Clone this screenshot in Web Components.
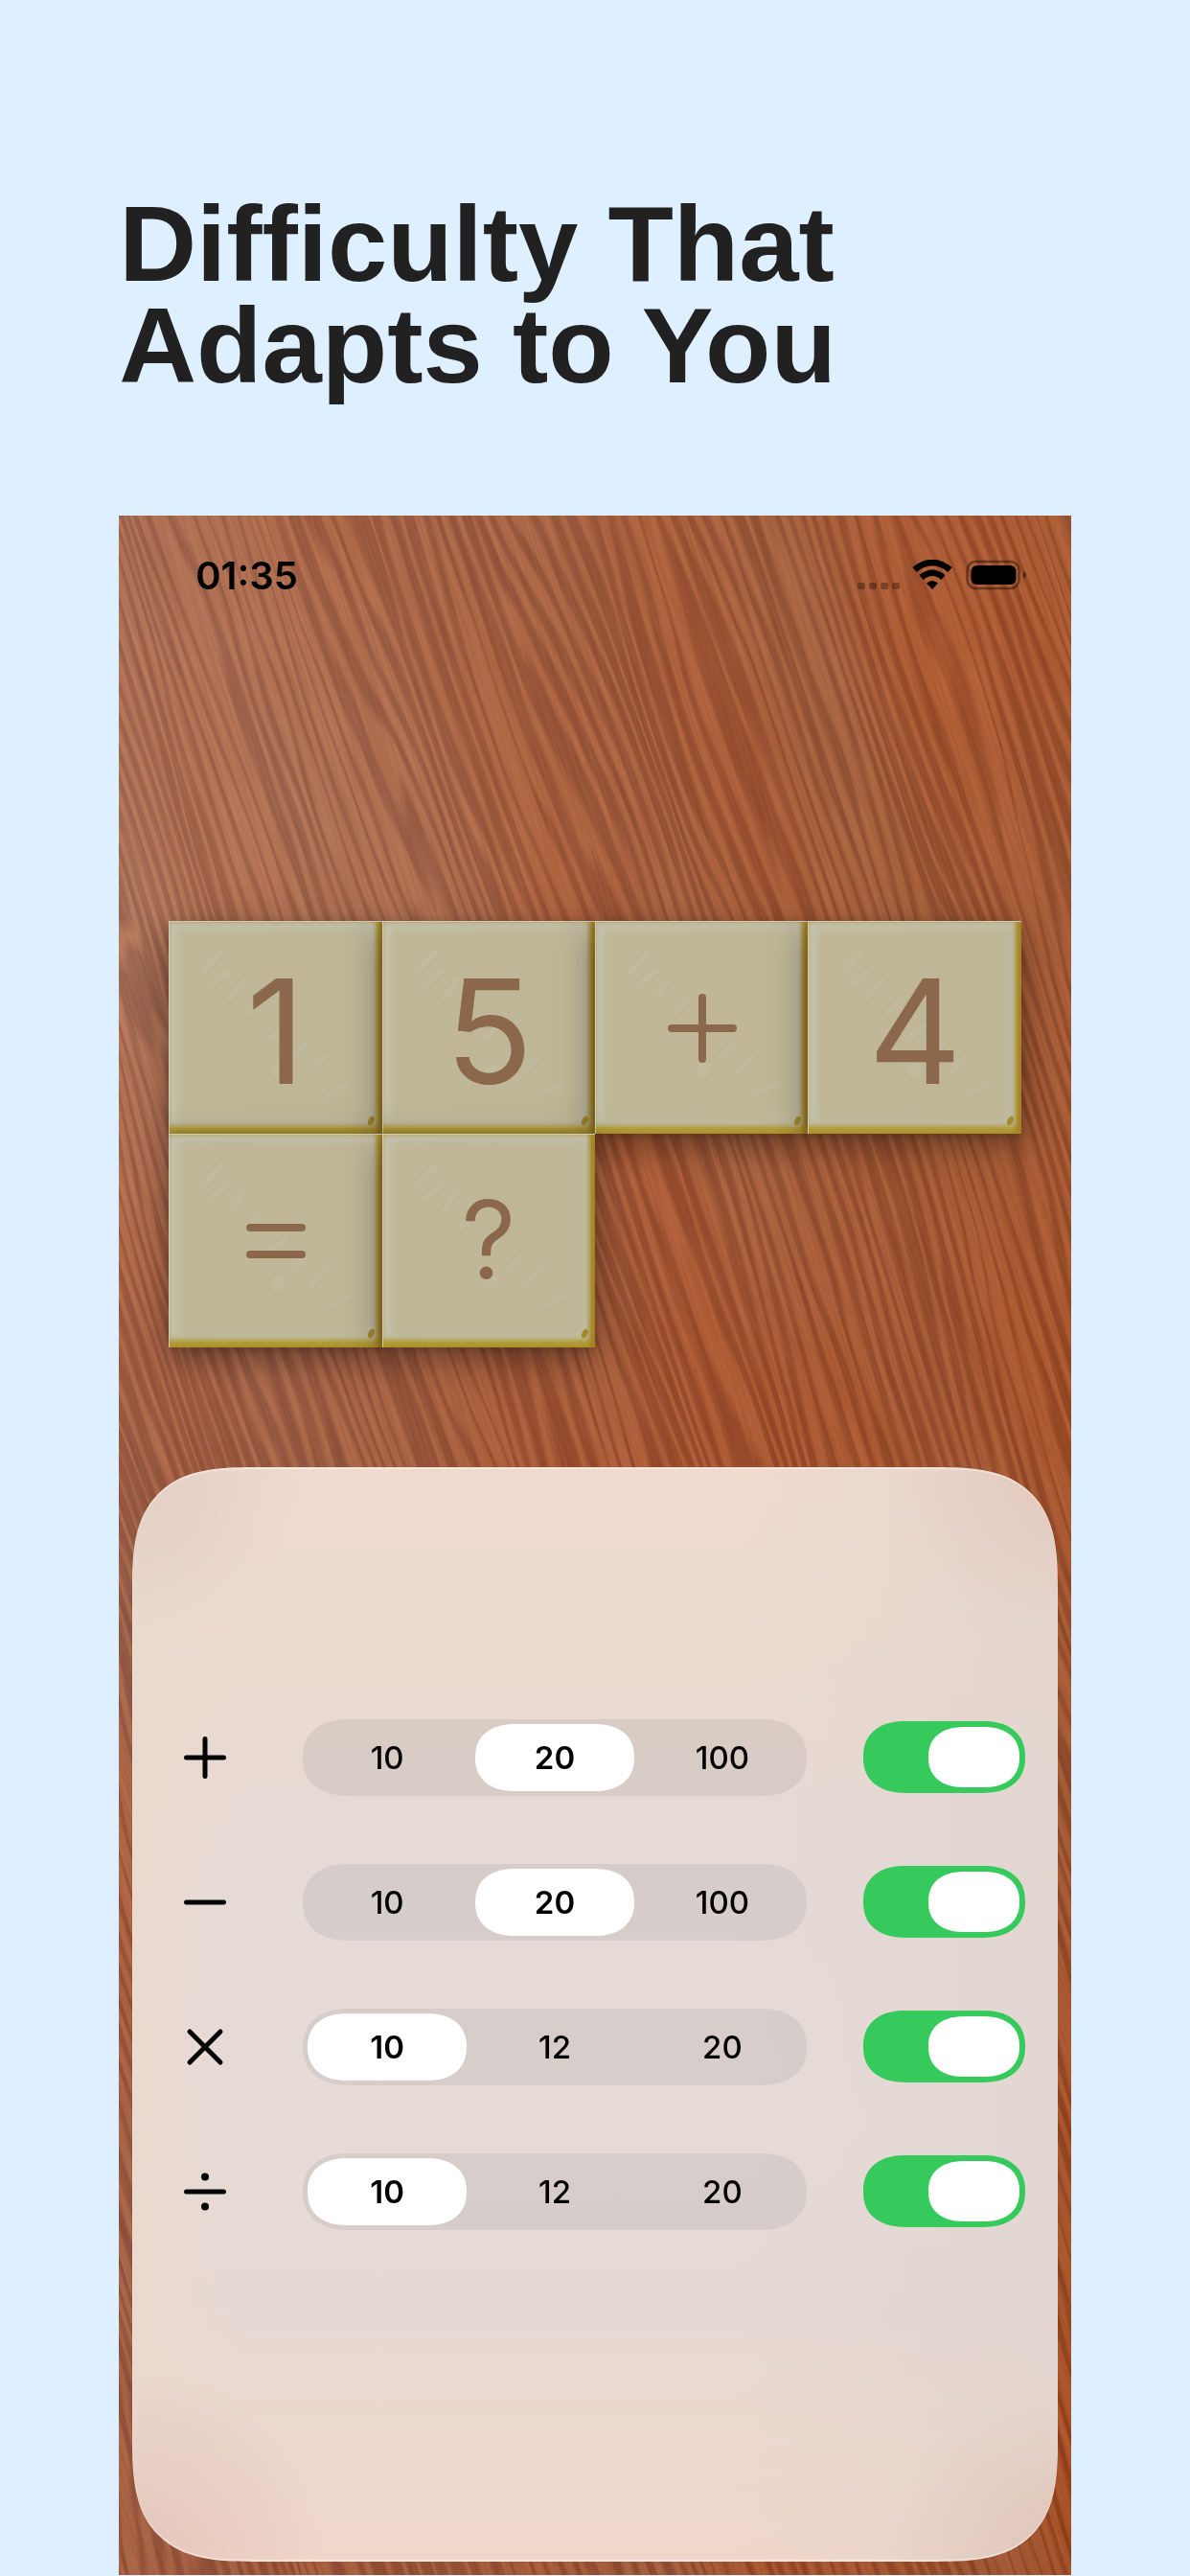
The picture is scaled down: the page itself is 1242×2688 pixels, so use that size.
<!DOCTYPE html>
<html lang="en">
<head>
<meta charset="utf-8">
<meta name="viewport" content="width=device-width, initial-scale=1">
<title>Difficulty That Adapts to You</title>
<style>
	body {
		margin: 0;
		background: #def0ff;
	}
</style>
</head>
<body>
<promo-page>
	<span slot="title">Difficulty That<br>Adapts to You</span>
	<wood-surface>
		<status-bar time="01:35"></status-bar>
		<tile-board>
			<math-tile>1</math-tile>
			<math-tile>5</math-tile>
			<math-tile symbol="plus"></math-tile>
			<math-tile>4</math-tile>
			<math-tile symbol="equals"></math-tile>
			<math-tile symbol="unknown"></math-tile>
		</tile-board>
		<settings-panel>
			<operation-row operation="plus" options="10,20,100" value="20"></operation-row>
			<operation-row operation="minus" options="10,20,100" value="20"></operation-row>
			<operation-row operation="times" options="10,12,20" value="10"></operation-row>
			<operation-row operation="divide" options="10,12,20" value="10"></operation-row>
		</settings-panel>
	</wood-surface>
</promo-page>

<script>
function attach (el, html) {
	const template = document.createElement('template');
	template.innerHTML = html;
	const root = el.attachShadow({ mode : 'open' });
	root.appendChild(template.content.cloneNode(true));
	return root;
}

class PromoPage extends HTMLElement {
	constructor () {
		super();
		attach(this, `
			<style>
				:host {
					display: flex;
					flex-direction: column;
					gap: 124px;
					padding: 202px 10% 2px;
				}
				h1 {
					margin: 0;
					color: #212121;
					font: bold 112px/106px "Liberation Sans", Arial, sans-serif;
				}
			</style>
			<h1><slot name="title"></slot></h1>
			<slot></slot>
		`);
	}
}

// smooth value noise, one lattice for the whole surface
const lattice = new Float32Array(65536);
let seed = 7;
for (let i = 0; i < lattice.length; i++) {
	seed = (seed * 1664525 + 1013904223) >>> 0;
	lattice[i] = seed / 4294967296;
}

function noise (x, y) {
	const xi = Math.floor(x), yi = Math.floor(y);
	let fx = x - xi, fy = y - yi;
	fx = fx * fx * (3 - 2 * fx);
	fy = fy * fy * (3 - 2 * fy);
	const x0 = xi & 255, x1 = (xi + 1) & 255;
	const y0 = (yi & 255) << 8, y1 = ((yi + 1) & 255) << 8;
	const a = lattice[y0 + x0], b = lattice[y0 + x1];
	const c = lattice[y1 + x0], d = lattice[y1 + x1];
	return a + (b - a) * fx + (c - a + (a - b - c + d) * fx) * fy;
}

class WoodSurface extends HTMLElement {
	constructor () {
		super();
		this._root = attach(this, `
			<style>
				:host {
					display: flex;
					flex-direction: column;
					position: relative;
					overflow: hidden;
					padding-bottom: 14px;
					background: #a3623f;
				}
				canvas {
					position: absolute;
					inset: 0;
					width: 100%;
					height: 100%;
				}
			</style>
			<canvas></canvas>
			<slot></slot>
		`);
	}

	connectedCallback () {
		this.paint();
		window.addEventListener('resize', () => this.paint());
	}

	paint () {
		const canvas = this._root.querySelector('canvas');
		const w = canvas.width = this.clientWidth;
		const h = canvas.height = this.clientHeight;
		if (!w || !h) return;
		const ctx = canvas.getContext('2d');
		const image = ctx.createImageData(w, h);
		const px = image.data;
		let i = 0;
		for (let y = 0; y < h; y++) {
			for (let x = 0; x < w; x++) {
				// u runs across the grain, v along it
				const u = x * 0.95 - y * 0.31 + 2000;
				const v = x * 0.31 + y * 0.95;
				const ring = u / 15 + 5 * noise(u / 230, v / 800) + 2.4 * noise(u / 45 + 30, v / 420) + 0.5 * noise(u / 12, v / 120);
				const wave = Math.abs((ring - Math.floor(ring)) * 2 - 1);
				const cut = 0.15 + 0.75 * noise(u / 34 + 90, v / 330 + 11);
				let dark = (wave - cut) * 2.6 + 0.5;
				dark = dark < 0 ? 0 : dark > 1 ? 1 : dark;
				const fine = noise(u / 2, v / 55) - 0.5;
				const patch = noise(u / 110 + 50, v / 380 + 5) - 0.5;
				const t = x / w;
				const glow = Math.max(0, 1 - Math.hypot(x + 20, y - h * 0.2) / (w * 0.6));
				const fade = y / h;
				px[i++] = 175 - 2 * t - 23 * dark + 12 * fine + 12 * glow - 8 * fade + 8 * patch;
				px[i++] = 108 - 13 * t - 18 * dark + 11 * fine + 14 * glow - 9 * fade - 8 * patch;
				px[i++] = 79 - 24 * t - 12 * dark + 10 * fine + 12 * glow - 9 * fade - 14 * patch;
				px[i++] = 255;
			}
		}
		ctx.putImageData(image, 0, 0);
	}
}

class StatusBar extends HTMLElement {
	constructor () {
		super();
		const root = attach(this, `
			<style>
				:host {
					display: flex;
					justify-content: space-between;
					align-items: center;
					position: relative;
					padding: 43px 46px 0 80px;
					color: #000;
					font: 600 40px/40px Inter, "Liberation Sans", sans-serif;
				}
				svg {
					display: block;
					width: 178px;
					height: 34px;
				}
			</style>
			<time></time>
			<svg viewBox="0 0 178 34" aria-hidden="true">
				<g fill="#000" fill-opacity=".3">
					<rect x="1" y="24" width="8" height="7" rx="2"/>
					<rect x="13" y="24" width="8" height="7" rx="2"/>
					<rect x="25" y="24" width="8" height="7" rx="2"/>
					<rect x="37" y="24" width="8" height="7" rx="2"/>
				</g>
				<g fill="none" stroke="#000" stroke-width="6.500">
					<path d="M60.500 10.500Q79 -4.500 97.500 10.500"/>
					<path d="M67.500 18.500Q79 9 90.500 18.500"/>
				</g>
				<path d="M73 24.500Q79 19.500 85 24.500L79 31Z"/>
				<rect x="115.500" y="2" width="54" height="28" rx="9" fill="none" stroke="#000" stroke-opacity=".4" stroke-width="2.500"/>
				<rect x="119.500" y="6" width="47" height="20" rx="6"/>
				<path d="M174 12Q180 16 174 20Z" fill-opacity=".5"/>
			</svg>
		`);
		root.querySelector('time').textContent = this.getAttribute('time');
	}
}

class TileBoard extends HTMLElement {
	constructor () {
		super();
		attach(this, `
			<style>
				:host {
					display: grid;
					grid-template-columns: repeat(4, 1fr);
					position: relative;
					margin: 340px 52px 125px;
				}
			</style>
			<slot></slot>
		`);
	}
}

const tileSymbols = {
	plus : '<path d="M40 76H104M72 44V108"/>',
	equals : '<path d="M45 62H99M45 90H99"/>',
	unknown : '<text x="72" y="114" text-anchor="middle">?</text>'
};

class MathTile extends HTMLElement {
	constructor () {
		super();
		const symbol = this.getAttribute('symbol');
		attach(this, `
			<style>
				:host {
					display: grid;
					place-items: center;
					position: relative;
					box-sizing: border-box;
					aspect-ratio: 1;
					color: #8b674b;
					font: 400 151px/152px Inter, "Liberation Sans", sans-serif;
					background: linear-gradient(90deg, #c6c6b4, #bfb798 6%, #beb697 92%, #bfbda6);
					border-top: 1px solid #c9cdbf;
					border-left: 1px solid #c9cdbf;
					box-shadow:
						0 12px 34px rgba(35, 22, 15, .5),
						0 2px 8px rgba(35, 22, 15, .2),
						inset -7px 0 5px -1px #a5841f,
						inset 0 -9px 5px -1px #b09830,
						inset 0 10px 10px -4px #c4c2ae,
						inset -18px -20px 14px -8px #bfbda6;
				}
				.marks {
					position: absolute;
					inset: 0;
					width: 100%;
					height: 100%;
				}
				.glyph {
					grid-area: 1 / 1;
					position: relative;
				}
				.digit {
					padding-top: 6px;
				}
				.icon {
					width: 144px;
					height: 152px;
					fill: none;
					stroke: currentColor;
					stroke-width: 8;
					stroke-linecap: round;
					stroke-linejoin: round;
				}
				.icon text {
					font: 300 110px Inter, "Liberation Sans", sans-serif;
					fill: currentColor;
					stroke-width: 2;
				}
			</style>
			<svg class="marks" viewBox="0 0 222 222" aria-hidden="true">
				<g fill="none" stroke="#c8c0aa" stroke-opacity=".35" stroke-width="5" stroke-linecap="round">
					<path d="M36 52L54 32M44 66L62 52M62 80L78 60M82 96L96 82"/>
					<path d="M104 122L122 108M128 142L144 126M148 158L165 140M166 180L188 170"/>
				</g>
				<circle cx="113" cy="156" r="8" fill="#c5bea4" fill-opacity=".4"/>
				<ellipse cx="211" cy="208" rx="3" ry="5" fill="#9f8b2c" transform="rotate(25 211 208)"/>
			</svg>
			${symbol
				? `<svg class="glyph icon" viewBox="0 0 144 152" role="img" aria-label="${symbol}">${tileSymbols[symbol]}</svg>`
				: '<span class="glyph digit"><slot></slot></span>'}
		`);
	}
}

class SettingsPanel extends HTMLElement {
	constructor () {
		super();
		attach(this, `
			<style>
				:host {
					display: flex;
					flex-direction: column;
					gap: 71px;
					position: relative;
					box-sizing: border-box;
					margin: 0 14px;
					padding: 263px 34px 346px 52px;
					border-radius: 95px;
					background:
						radial-gradient(circle at 0 0, rgba(220, 200, 190, .6), transparent 180px),
						radial-gradient(circle at 100% 0, rgba(225, 190, 178, .6), transparent 170px),
						radial-gradient(circle at 0 100%, rgba(224, 184, 172, .6), transparent 200px),
						radial-gradient(circle at 100% 100%, rgba(220, 184, 168, .6), transparent 170px),
						linear-gradient(90deg, rgba(235, 217, 205, .8), transparent 12%, transparent 65%, rgba(224, 212, 206, .6)),
						linear-gradient(#efdacd, #ebdacf 15%, #e5dad6 38%, #e6dbd7 60%, #e5d9d4 76%, #ecd8cd 90%, #f0d6ca);
					box-shadow: inset 0 2px 1px rgba(255, 255, 255, .4), inset 0 -2px 1px rgba(255, 255, 255, .4), inset 0 0 1px rgba(255, 255, 255, .6);
				}
				@supports (corner-shape: superellipse(1.5)) {
					:host {
						border-radius: 126px;
						corner-shape: superellipse(1.5);
					}
				}
			</style>
			<slot></slot>
		`);
	}
}

const operationIcons = {
	plus : '<path d="M4.500 24H43.500M24 4.500V43.500"/>',
	minus : '<path d="M4.500 24H43.500"/>',
	times : '<path d="M8 8L40 40M40 8L8 40"/>',
	divide : '<path d="M4.500 24H43.500"/><circle cx="24" cy="8.500" r="4"/><circle cx="24" cy="39.500" r="4"/>'
};

class OperationRow extends HTMLElement {
	constructor () {
		super();
		const operation = this.getAttribute('operation');
		attach(this, `
			<style>
				:host {
					display: flex;
					align-items: center;
				}
				svg {
					flex: none;
					width: 48px;
					height: 48px;
					margin-right: 78px;
					fill: none;
					stroke: #050505;
					stroke-width: 5;
					stroke-linecap: round;
				}
				circle {
					fill: #050505;
					stroke: none;
				}
				segmented-control {
					flex: 1;
					margin-right: 59px;
				}
			</style>
			<svg viewBox="0 0 48 48" role="img" aria-label="${operation}">${operationIcons[operation]}</svg>
			<segmented-control label="${operation} limit" options="${this.getAttribute('options')}" value="${this.getAttribute('value')}"></segmented-control>
			<toggle-switch label="Use ${operation}"></toggle-switch>
		`);
	}
}

class SegmentedControl extends HTMLElement {
	constructor () {
		super();
		attach(this, `
			<style>
				:host {
					display: block;
				}
				fieldset {
					display: grid;
					grid-template-columns: repeat(3, 1fr);
					gap: 9px;
					min-width: 0;
					margin: 0;
					padding: 5px;
					border: 0;
					border-radius: 40px;
					background: rgba(110, 105, 110, .12);
				}
				label {
					display: grid;
					height: 70px;
					place-items: center;
					color: #000;
					font: 500 33px/40px Inter, "Liberation Sans", sans-serif;
					cursor: pointer;
				}
				input, span {
					grid-area: 1 / 1;
				}
				input {
					appearance: none;
					width: 100%;
					height: 100%;
					margin: 0;
					border-radius: 42px / 35px;
				}
				input:checked {
					background: #fff;
				}
				input:checked + span {
					font-weight: 600;
				}
				span {
					position: relative;
				}
				@supports (corner-shape: superellipse(1.2)) {
					fieldset {
						border-radius: 48px / 40px;
						corner-shape: superellipse(1.2);
					}
					input {
						corner-shape: superellipse(1.2);
					}
				}
			</style>
			<fieldset></fieldset>
		`);
	}

	connectedCallback () {
		const $fieldset = this.shadowRoot.querySelector('fieldset');
		const value = this.getAttribute('value');
		$fieldset.setAttribute('aria-label', this.getAttribute('label'));
		$fieldset.innerHTML = this.getAttribute('options').split(',').map(option => `
			<label><input type="radio" name="limit" value="${option}" ${option === value ? 'checked' : ''}><span>${option}</span></label>
		`).join('');
	}
}

class ToggleSwitch extends HTMLElement {
	constructor () {
		super();
		attach(this, `
			<style>
				:host {
					display: block;
					flex: none;
				}
				input {
					appearance: none;
					display: flex;
					align-items: center;
					box-sizing: border-box;
					width: 169px;
					height: 75px;
					margin: 0;
					padding: 0 6px;
					border-radius: 44px / 37px;
					background: #cdc5c4;
					cursor: pointer;
				}
				input::before {
					content: "";
					width: 95px;
					height: 63px;
					border-radius: 38px / 31px;
					background: #fff;
				}
				input:checked {
					justify-content: flex-end;
					background: #36c95b;
				}
				@supports (corner-shape: superellipse(1.2)) {
					input, input::before {
						corner-shape: superellipse(1.2);
					}
				}
			</style>
			<input type="checkbox" role="switch" aria-label="${this.getAttribute('label')}" checked>
		`);
	}
}

window.customElements.define('toggle-switch', ToggleSwitch);
window.customElements.define('segmented-control', SegmentedControl);
window.customElements.define('operation-row', OperationRow);
window.customElements.define('settings-panel', SettingsPanel);
window.customElements.define('math-tile', MathTile);
window.customElements.define('tile-board', TileBoard);
window.customElements.define('status-bar', StatusBar);
window.customElements.define('promo-page', PromoPage);
window.customElements.define('wood-surface', WoodSurface);
</script>
</body>
</html>
